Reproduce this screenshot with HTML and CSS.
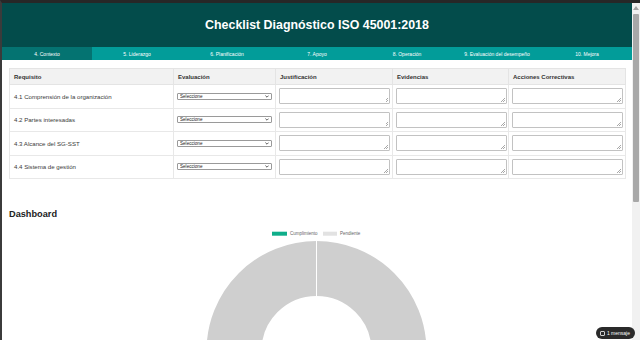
FILE: index.html
```html
<!DOCTYPE html>
<html lang="es">
<head>
<meta charset="utf-8">
<title>Checklist Diagnóstico ISO 45001:2018</title>
<link rel="stylesheet" href="styles.css">
</head>
<body>
<div class="frame">
  <div class="page">
    <header class="header">
      <h1 class="title">Checklist Diagnóstico ISO 45001:2018</h1>
    </header>
    <nav class="tabs">
      <div class="tab active">4. Contexto</div>
      <div class="tab">5. Liderazgo</div>
      <div class="tab">6. Planificación</div>
      <div class="tab">7. Apoyo</div>
      <div class="tab">8. Operación</div>
      <div class="tab">9. Evaluación del desempeño</div>
      <div class="tab">10. Mejora</div>
    </nav>
    <main class="content">
      <table class="checklist">
        <colgroup>
          <col class="c1"><col class="c2"><col class="c3"><col class="c4"><col class="c5">
        </colgroup>
        <thead>
          <tr>
            <th>Requisito</th>
            <th>Evaluación</th>
            <th>Justificación</th>
            <th>Evidencias</th>
            <th>Acciones Correctivas</th>
          </tr>
        </thead>
        <tbody>
          <tr>
            <td>4.1 Comprensión de la organización</td>
            <td><span class="sel-wrap"><select class="sel"><option>Seleccione</option></select><svg class="chev" width="4" height="3" viewBox="0 0 4 3"><path d="M0.4 0.6 L2 2.2 L3.6 0.6" fill="none" stroke="#333" stroke-width="0.8"/></svg></span></td>
            <td><textarea class="ta"></textarea></td>
            <td><textarea class="ta"></textarea></td>
            <td><textarea class="ta"></textarea></td>
          </tr>
          <tr>
            <td>4.2 Partes interesadas</td>
            <td><span class="sel-wrap"><select class="sel"><option>Seleccione</option></select><svg class="chev" width="4" height="3" viewBox="0 0 4 3"><path d="M0.4 0.6 L2 2.2 L3.6 0.6" fill="none" stroke="#333" stroke-width="0.8"/></svg></span></td>
            <td><textarea class="ta"></textarea></td>
            <td><textarea class="ta"></textarea></td>
            <td><textarea class="ta"></textarea></td>
          </tr>
          <tr>
            <td>4.3 Alcance del SG-SST</td>
            <td><span class="sel-wrap"><select class="sel"><option>Seleccione</option></select><svg class="chev" width="4" height="3" viewBox="0 0 4 3"><path d="M0.4 0.6 L2 2.2 L3.6 0.6" fill="none" stroke="#333" stroke-width="0.8"/></svg></span></td>
            <td><textarea class="ta"></textarea></td>
            <td><textarea class="ta"></textarea></td>
            <td><textarea class="ta"></textarea></td>
          </tr>
          <tr>
            <td>4.4 Sistema de gestión</td>
            <td><span class="sel-wrap"><select class="sel"><option>Seleccione</option></select><svg class="chev" width="4" height="3" viewBox="0 0 4 3"><path d="M0.4 0.6 L2 2.2 L3.6 0.6" fill="none" stroke="#333" stroke-width="0.8"/></svg></span></td>
            <td><textarea class="ta"></textarea></td>
            <td><textarea class="ta"></textarea></td>
            <td><textarea class="ta"></textarea></td>
          </tr>
        </tbody>
      </table>
      <h2 class="dash-title">Dashboard</h2>
      <svg class="chart" width="616" height="130" viewBox="0 0 616 130">
        <rect x="263" y="5.7" width="15" height="4" fill="#0fae8a"/>
        <text x="281" y="9.3" class="legend">Cumplimiento</text>
        <rect x="314" y="5.7" width="14" height="4" fill="#e2e2e2"/>
        <text x="331" y="9.3" class="legend">Pendiente</text>
        <circle cx="307.5" cy="125" r="82.5" fill="none" stroke="#cfcfcf" stroke-width="55"/>
        <line x1="307.5" y1="14" x2="307.5" y2="70.5" stroke="#ffffff" stroke-width="1"/>
      </svg>
    </main>
  </div>
  <div class="scrollbar">
    <div class="arrow"></div>
    <div class="thumb"></div>
  </div>
</div>
<div class="badge"><span class="badge-icon"></span>1 mensaje</div>
</body>
</html>
```
FILE: styles.css
```css
html, body {
  margin: 0;
  padding: 0;
  height: 340px;
  overflow: hidden;
  background: #ffffff;
  font-family: "Liberation Sans", Arial, sans-serif;
}
.frame {
  display: flex;
  height: 337px;
  border-top: 3px solid #272727;
  border-left: 2px solid #3b3b3b;
  overflow: hidden;
}
.page {
  width: 630px;
  flex: none;
  overflow: hidden;
}
.header {
  height: 44px;
  background: #034c4b;
  display: flex;
  align-items: center;
  justify-content: center;
}
.title {
  margin: 0;
  color: #ffffff;
  font-size: 12.4px;
  font-weight: bold;
}
.tabs {
  display: flex;
  height: 13px;
  background: #029c99;
}
.tab {
  flex: 1;
  display: flex;
  align-items: center;
  justify-content: center;
  color: #ffffff;
  font-size: 5px;
}
.tab.active {
  background: #047371;
}
.content {
  padding: 8px 7px 0 7px;
}
.checklist {
  width: 616px;
  border-collapse: collapse;
  table-layout: fixed;
  font-size: 6.1px;
  color: #3a3a3a;
  border: 1px solid #e4e4e4;
}
.c1 { width: 164px; }
.c2 { width: 102px; }
.c3 { width: 117px; }
.c4 { width: 116px; }
.c5 { width: 117px; }
.checklist th {
  height: 15px;
  background: #f2f2f2;
  text-align: left;
  font-weight: bold;
  font-size: 6px;
  color: #333333;
  padding: 0 4px;
  border: 1px solid #e4e4e4;
}
.checklist td {
  height: 22.5px;
  padding: 0 3px 0 4px;
  border: 1px solid #e8e8e8;
  vertical-align: middle;
}
.sel-wrap {
  position: relative;
  display: block;
  width: 95px;
  height: 7px;
  margin-left: -1px;
}
.sel {
  -webkit-appearance: none;
  appearance: none;
  display: block;
  box-sizing: border-box;
  width: 95px;
  height: 7px;
  margin: 0;
  font-size: 4.6px;
  line-height: 5px;
  padding: 0 0 0 2px;
  border: 1px solid #9a9a9a;
  border-radius: 1px;
  background: #ffffff;
  color: #222222;
  font-family: "Liberation Sans", Arial, sans-serif;
}
.chev {
  position: absolute;
  right: 3px;
  top: 2px;
  pointer-events: none;
}
.ta {
  display: block;
  box-sizing: border-box;
  width: 111px;
  height: 16px;
  margin: 0 0 0 -1px;
  padding: 0;
  border: 1px solid #c2c2c2;
  border-radius: 1px;
  font-size: 5px;
  resize: none;
  background:
    linear-gradient(135deg, transparent 0 50%, #a8a8a8 50% 60%, transparent 60% 72%, #a8a8a8 72% 82%, transparent 82%) no-repeat right 1px bottom 1px / 4px 4px,
    #ffffff;
}
.dash-title {
  margin: 29px 0 0 0;
  font-size: 9.2px;
  line-height: 13px;
  font-weight: bold;
  color: #222222;
}
.chart {
  display: block;
  margin-top: 5px;
}
.legend {
  font-size: 4.5px;
  fill: #666666;
  font-family: "Liberation Sans", Arial, sans-serif;
}
.scrollbar {
  width: 8px;
  flex: none;
  background: #f1f1f1;
  display: flex;
  flex-direction: column;
  align-items: center;
}
.arrow {
  margin-top: 3px;
  width: 0;
  height: 0;
  border-left: 3px solid transparent;
  border-right: 3px solid transparent;
  border-bottom: 4px solid #a3a3a3;
}
.thumb {
  margin-top: 4px;
  width: 6px;
  height: 188px;
  background: #a8a8a8;
  border-radius: 1px;
}
.badge {
  position: fixed;
  right: 5px;
  bottom: 1px;
  height: 12px;
  padding: 0 5px 0 4px;
  display: flex;
  align-items: center;
  gap: 2px;
  background: #2a2a2a;
  color: #ffffff;
  font-size: 5px;
  border-radius: 6px;
}
.badge-icon {
  width: 3px;
  height: 3px;
  border: 1px solid #cfcfcf;
  border-radius: 1px;
}
```
